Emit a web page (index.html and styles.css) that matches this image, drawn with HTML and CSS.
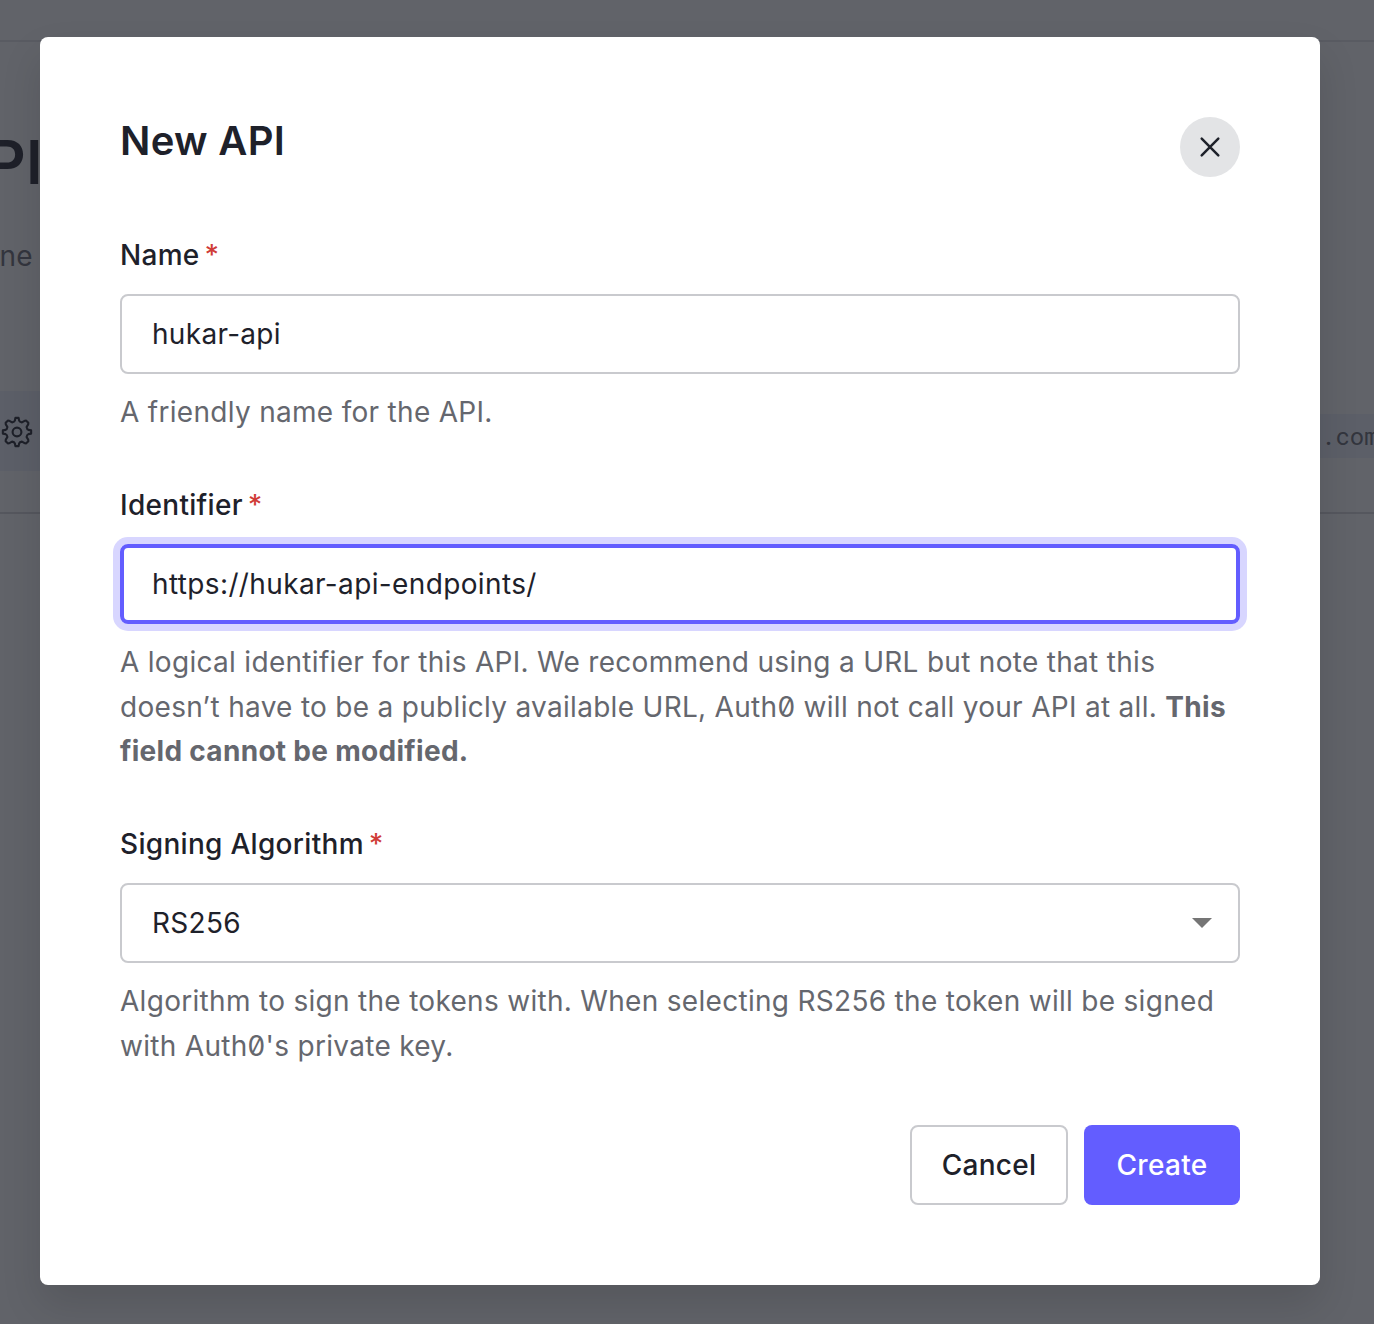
FILE: index.html
```html
<!DOCTYPE html>
<html lang="en">
<head>
<meta charset="utf-8">
<title>New API</title>
<link rel="stylesheet" href="styles.css">
</head>
<body>
<main class="page">
  <div class="topbar"></div>
  <h1 class="page-title">APIs</h1>
  <p class="page-intro"><span>Define</span></p>
  <section class="row">
    <div class="row-icon">
      <svg width="32" height="32" viewBox="0 0 24 24" fill="none" stroke="currentColor" stroke-width="1.6" stroke-linejoin="round"><circle cx="12" cy="12" r="3.3"/><path d="M10.4 3.5 10.8 1.4H13.2L13.6 3.5 Q14 4.5 15.7 4.8L17.7 3.6 18.9 3.5 20.5 5.1 20.4 6.3 19.2 8.3Q19.5 10 20.5 10.4L22.6 10.8V13.2L20.5 13.6Q19.5 14 19.2 15.7L20.4 17.7 20.5 18.9 18.9 20.5 17.7 20.4 15.7 19.2Q14 19.5 13.6 20.5L13.2 22.6H10.8L10.4 20.5Q10 19.5 8.3 19.2L6.3 20.4 5.1 20.5 3.5 18.9 3.6 17.7 4.8 15.7Q4.5 14 3.5 13.6L1.4 13.2V10.8L3.5 10.4Q4.5 10 4.8 8.3L3.6 6.3 3.5 5.1 5.1 3.5 6.3 3.6 8.3 4.8Q10 4.5 10.4 3.5Z"/></svg>
    </div>
    <code class="row-code">.com</code>
  </section>
</main>
<div class="overlay">
  <div class="dialog" role="dialog" aria-labelledby="title">
    <header class="dialog-header">
      <h2 class="dialog-title" id="title">New API</h2>
      <button class="close" aria-label="Close"><svg width="22" height="22" viewBox="0 0 22 22" fill="none" stroke="currentColor" stroke-width="2.5" stroke-linecap="round"><path d="M2.7 2.7 19.3 19.3M19.3 2.7 2.7 19.3"/></svg></button>
    </header>
    <form class="form">
      <div class="field">
        <div class="label">Name<span class="required">*</span></div>
        <div class="control">hukar-api</div>
        <p class="help">A friendly name for the API.</p>
      </div>
      <div class="field">
        <div class="label">Identifier<span class="required">*</span></div>
        <div class="control control-focus">https://hukar-api-endpoints/</div>
        <p class="help">A logical identifier for this API. We recommend using a URL but note that this<br>doesn’t have to be a publicly available URL, Auth0 will not call your API at all. <strong>This<br>field cannot be modified.</strong></p>
      </div>
      <div class="field">
        <div class="label">Signing Algorithm<span class="required">*</span></div>
        <div class="control control-select">RS256<svg width="20" height="10" viewBox="0 0 20 10" fill="#757575"><path d="M0 0H20L10 10Z"/></svg></div>
        <p class="help">Algorithm to sign the tokens with. When selecting RS256 the token will be signed<br>with Auth0's private key.</p>
      </div>
    </form>
    <footer class="actions">
      <button class="button button-cancel">Cancel</button>
      <button class="button button-create">Create</button>
    </footer>
  </div>
</div>
</body>
</html>
```
FILE: styles.css
```css
* { box-sizing: border-box; }
body {
  margin: 0;
  height: 1324px;
  overflow: hidden;
  color: #1e212a;
  font: 400 28px/44.8px Inter, sans-serif;
  font-optical-sizing: none;
  letter-spacing: 0.3px;
  font-feature-settings: "zero";
}
h1, h2, p { margin: 0; }
button { font: inherit; letter-spacing: inherit; color: inherit; }

.page { height: 1324px; overflow: hidden; background: #fff; }
.topbar { height: 42px; border-bottom: 2px solid #e3e4e6; }
.page-title {
  margin: 84px 0 0 -57px;
  font-size: 60px;
  line-height: 72px;
  font-weight: 600;
}
.page-intro {
  width: 33px;
  margin-top: 36px;
  display: flex;
  justify-content: flex-end;
  color: #65676e;
}
.row {
  margin-top: 112px;
  height: 123px;
  display: flex;
  justify-content: space-between;
  align-items: flex-start;
  border-bottom: 2px solid #d5d6d9;
}
.row-icon {
  width: 80px;
  height: 80px;
  padding: 2px 0 0 1px;
  display: flex;
  align-items: center;
  background: #eff2fb;
}
.row-code {
  width: 134px;
  height: 44px;
  margin-top: 23px;
  padding-left: 81px;
  background: #eff2fb;
  color: #65676e;
  font: 24px/44px "Roboto Mono", "DejaVu Sans Mono", monospace;
  letter-spacing: 0;
  overflow: hidden;
}

.overlay {
  position: absolute;
  inset: 0;
  padding: 37px 54px 39px 40px;
  background: rgba(30, 33, 42, 0.7);
}
.dialog {
  height: 1248px;
  padding: 80px;
  display: flex;
  flex-direction: column;
  background: #fff;
  border-radius: 8px;
  box-shadow: 0 20px 40px rgba(0, 0, 0, 0.12);
}
.dialog-header {
  height: 116.4px;
  display: flex;
  justify-content: space-between;
  align-items: flex-start;
}
.dialog-title { font-size: 40px; line-height: 48px; font-weight: 600; }
.close {
  width: 60px;
  height: 60px;
  padding: 0;
  display: grid;
  place-items: center;
  border: 0;
  border-radius: 50%;
  background: #e3e4e6;
}
.form { display: flex; flex-direction: column; gap: 48px; }
.label { display: flex; gap: 5px; font-weight: 500; }
.required { color: #d03c38; }
.control {
  height: 80px;
  margin: 16px 0;
  padding: 1px 30px 0;
  display: flex;
  align-items: center;
  border: 2px solid #c9cace;
  border-radius: 8px;
}
.control-focus {
  padding: 1px 28px 0;
  border: 4px solid #635dff;
  box-shadow: 0 0 0 7px #d8d6ff;
  letter-spacing: 0.37px;
}
.control-select { justify-content: space-between; padding-right: 26px; }
.help { color: #65676e; white-space: nowrap; }
.actions {
  margin-top: auto;
  display: flex;
  justify-content: flex-end;
  gap: 16px;
}
.button {
  width: 156px;
  height: 80px;
  padding: 0;
  border: 0;
  border-radius: 8px;
  font-weight: 500;
}
.button-cancel { width: 158px; border: 2px solid #c9cace; background: #fff; }
.button-create { background: #635dff; color: #fff; }
```
